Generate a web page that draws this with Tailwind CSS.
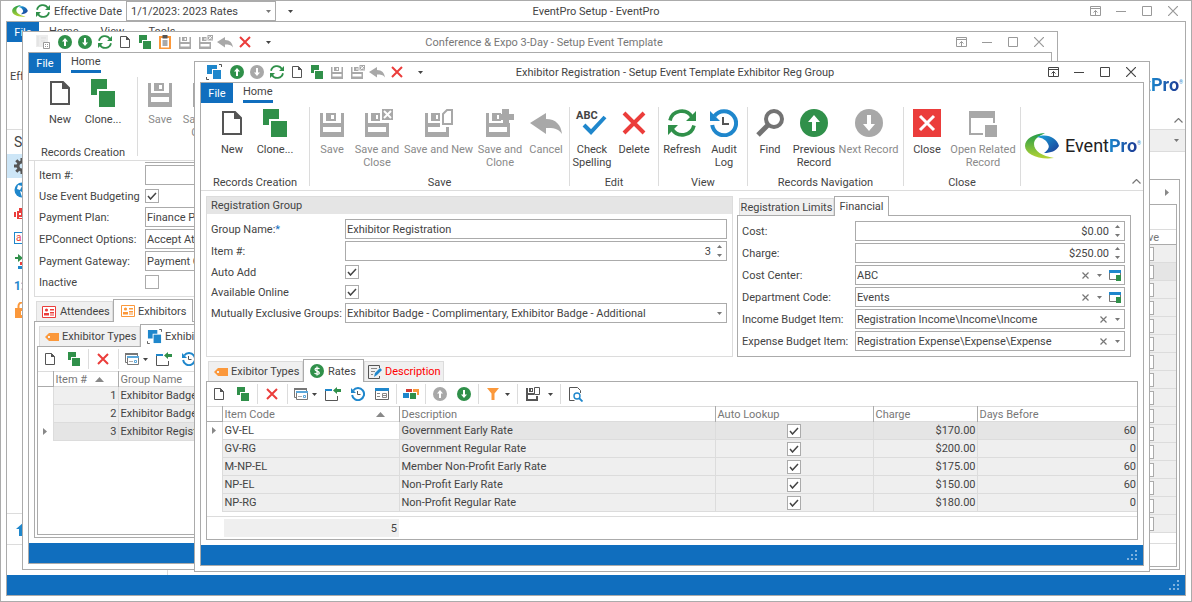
<!DOCTYPE html>
<html lang="en">
<head>
    <meta charset="UTF-8">
    <meta name="viewport" content="width=device-width, initial-scale=1.0">
    <title>EventPro Setup - EventPro</title>
    <script src="https://cdn.jsdelivr.net/npm/@tailwindcss/browser@4"></script>
</head>
<body class="bg-white font-[Roboto,sans-serif] text-[11px] leading-[13px] text-[#444]">

    <!-- Icon sprite -->
    <svg class="absolute size-0" aria-hidden="true">
        <defs>
            <linearGradient id="gGreen" x1="0" y1="0" x2="0" y2="1"><stop offset="0" stop-color="#1f9a48"/><stop offset="1" stop-color="#b5d334"/></linearGradient>
            <linearGradient id="gBlue" x1="0" y1="0" x2="1" y2="1"><stop offset="0" stop-color="#19a5dc"/><stop offset="1" stop-color="#1d3a94"/></linearGradient>
        </defs>
        <symbol id="i-new" viewBox="0 0 28 28"><path d="M5 3h12l6 6v16H5z" fill="none" stroke="#555" stroke-width="2"/><path d="M16 2v8h8z" fill="#555"/></symbol>
        <symbol id="i-clone" viewBox="0 0 28 28"><path d="M2 0h16v10H8v6H2z" fill="#30904a"/><path d="M10 12h16v16H10z" fill="#30904a"/></symbol>
        <symbol id="i-save" viewBox="0 0 28 28"><path fill="currentColor" fill-rule="evenodd" d="M2 4h3v10h18V4h3v24H2zM5 18h18v5H5zM8 4h10v8H8zM13 6h3v4h-3z"/></symbol>
        <symbol id="i-saveclose" viewBox="-4 0 32 28"><path fill="currentColor" fill-rule="evenodd" d="M0 4h3v10h21v14H0zM3 18h18v5H3zM6 4h9v8H6zM11 6h2v4h-2zM17 0h11v11H17z"/><path d="M19 2l7 7m0-7l-7 7" stroke="#fff" stroke-width="2"/></symbol>
        <symbol id="i-savenew" viewBox="-2 0 32 28"><path fill="currentColor" fill-rule="evenodd" d="M0 4h3v10h12v4H3v5h18v-5h3v10H0zM6 4h9v8H6zM11 6h2v4h-2z"/><path d="M18 5l4-4h5v14h-9z" fill="none" stroke="currentColor" stroke-width="2"/></symbol>
        <symbol id="i-saveclone" viewBox="0 0 28 28"><path fill="currentColor" fill-rule="evenodd" d="M0 4h3v10h21v14H0zM3 18h18v5H3zM6 4h9v8H6zM11 6h2v4h-2z"/><path fill="currentColor" d="M16 0h7v5h5v6h-5v5h-6v-5h-2V5h1z"/></symbol>
        <symbol id="i-undo" viewBox="0 0 32 28"><path fill="currentColor" d="M0 14L16 4v6c10 0 15 6 16 15-4-6-9-6-16-6v6z"/></symbol>
        <symbol id="i-x" viewBox="0 0 28 28"><path d="M4 4l20 20M24 4L4 24" stroke="#eb3d3b" stroke-width="4" fill="none"/></symbol>
        <symbol id="i-spell" viewBox="0 0 32 28"><path d="M8 16l7 7L29 8" stroke="#1f87cc" stroke-width="4" fill="none"/></symbol>
        <symbol id="i-refresh" viewBox="0 0 28 28"><g fill="none" stroke="#30904a" stroke-width="3.6"><path d="M2 11.500A12 12 0 0 1 24 8"/><path d="M26 16.500A12 12 0 0 1 4 20"/></g><path d="M28 2v10H18zM0 26V16h10z" fill="#30904a"/></symbol>
        <symbol id="i-audit" viewBox="0 0 28 28"><path d="M4.500 7A12 12 0 1 1 2.200 16" fill="none" stroke="#1f87cc" stroke-width="4"/><path d="M0 2v10h10z" fill="#1f87cc"/><path d="M13 8v7h6" fill="none" stroke="#555" stroke-width="2"/></symbol>
        <symbol id="i-find" viewBox="0 0 28 28"><circle cx="18" cy="10" r="8" fill="none" stroke="#737373" stroke-width="4"/><path d="M12 16L2 26" stroke="#737373" stroke-width="5"/></symbol>
        <symbol id="i-up" viewBox="0 0 28 28"><circle cx="14" cy="14" r="14" fill="currentColor"/><path d="M14 6l6 7h-4v9h-4v-9H8z" fill="#fff"/></symbol>
        <symbol id="i-down" viewBox="0 0 28 28"><circle cx="14" cy="14" r="14" fill="currentColor"/><path d="M14 22l6-7h-4V6h-4v9H8z" fill="#fff"/></symbol>
        <symbol id="i-close" viewBox="0 0 28 28"><path d="M0 0h28v28H0z" fill="#eb3d3b"/><path d="M7 7l14 14M21 7L7 21" stroke="#fff" stroke-width="3"/></symbol>
        <symbol id="i-related" viewBox="0 0 28 28"><path d="M0 2h26v12h-2V9H2v15h12v2H0z" fill="#a8a8a8"/><path d="M16 16h12v12H16z" fill="#a8a8a8"/></symbol>
        <symbol id="i-clipboard" viewBox="0 0 28 28"><path d="M4 4h20v23H4z" fill="#fff" stroke="#fb983b" stroke-width="4"/><path d="M9 0h10v7H9z" fill="#555"/><path d="M9 12h10M9 16h10M9 20h10" stroke="#555" stroke-width="2"/></symbol>
        <symbol id="i-group" viewBox="0 0 16 16"><path d="M1 1h10v4H6v5H1z" fill="#1f87cc"/><path d="M7 6h8v9H7z" fill="#1f87cc"/><path d="M13 .5h2.500V3M.5 13v2.500H3" fill="none" stroke="#555"/></symbol>
        <symbol id="i-template" viewBox="0 0 14 14"><path d="M0 0h12v12H0z" fill="#ececec"/><path d="M2 1v10M5 3h5M5 6h4" stroke="#ddd"/><path d="M7.500 7.500h6v6h-6z" fill="#fff" stroke="#999"/><path d="M9 9.500h1m1 0h1m-3 2h1m1 0h1" stroke="#999"/></symbol>
        <symbol id="i-tag" viewBox="0 0 14 10"><path fill="#fb983b" fill-rule="evenodd" d="M0 5l4-4h10v8H4zM3 4h2v2H3z"/></symbol>
        <symbol id="i-card" viewBox="0 0 14 12"><path d="M.5.5h13v11H.5z" fill="#fff" stroke="currentColor"/><circle cx="4.500" cy="4" r="1.600" fill="currentColor"/><path d="M2 9.500V7h5v2.500zM8 3h4v1.500H8zM8 6h4v1.500H8zM8 8.500h4v1H8z" fill="currentColor"/></symbol>
        <symbol id="i-dollar" viewBox="0 0 14 14"><circle cx="7" cy="7" r="7" fill="#30904a"/><path d="M9.500 4.800C8.500 3.800 5 3.600 5 5.400S9.300 7 9.300 8.900 5.500 10.300 4.500 9.200M7 2.500v9" stroke="#fff" stroke-width="1.200" fill="none"/></symbol>
        <symbol id="i-note" viewBox="0 0 14 14"><path d="M11.500 3V.5H.5v13h11V11" fill="none" stroke="#555"/><path d="M3 3.500h6M3 6.500h4M3 9.500h2" stroke="#888"/><path d="M6 12l1-4 5-5 2 2-5 5z" fill="#1f87cc"/></symbol>
        <symbol id="i-views" viewBox="0 0 14 14"><path d="M.5 10.500v-9h12V4M.5 10.500H2" fill="none" stroke="#777"/><path d="M0 1h13v2H0z" fill="#777"/><path d="M2.500 4.500h11v8h-11z" fill="#fff" stroke="#777"/><path d="M2 4h12v2H2z" fill="#5ba7da"/><path d="M4 9.500h4" stroke="#aaa"/><path d="M9.500 8.500h2v2h-2z" fill="none" stroke="#5ba7da"/></symbol>
        <symbol id="i-export" viewBox="0 0 16 14"><path d="M5 2.500H.5v11h12V9" fill="none" stroke="#555"/><path d="M0 2h7v2H0z" fill="#1f87cc"/><path d="M8 3.500L12 0v2h4v3h-4v2z" fill="#30904a"/></symbol>
        <symbol id="i-form" viewBox="0 0 14 12"><path d="M.5.500h13v11H.5z" fill="#fff" stroke="#666"/><path d="M0 0h14v3H0z" fill="#1f87cc"/><path d="M2 5.500h3m-3 3h3" stroke="#888"/><path d="M7.500 5.500h4v4h-4zM7.500 7.500h4" fill="none" stroke="#888"/></symbol>
        <symbol id="i-cubes" viewBox="0 0 16 12"><path d="M0 5h6v5H0z" fill="#1f87cc"/><path d="M3 1h6v3H3z" fill="#d23b35"/><path d="M7 5h6v6H7z" fill="#30904a"/><path d="M10 1h6v6h-2V4h-4z" fill="#fb983b"/></symbol>
        <symbol id="i-funnel" viewBox="0 0 12 12"><path d="M0 0h12L7.500 5.500V12h-3V5.500z" fill="#fb983b"/></symbol>
        <symbol id="i-savecopy" viewBox="0 0 14 14"><path fill="#555" fill-rule="evenodd" d="M0 1h2v5h6v2H2v4h8V9h2v5H0zM3 1h4v4H3zM5 2h1v2H5z"/><path d="M8.500.5h5v7h-5z" fill="#fff" stroke="#555"/></symbol>
        <symbol id="i-preview" viewBox="0 0 14 15"><path d="M11.500 6V3.500l-3-3h-8v13h5" fill="none" stroke="#555"/><circle cx="8" cy="9" r="3" fill="#fff" stroke="#1f87cc" stroke-width="1.400"/><path d="M10 11l3.500 3.500" stroke="#1f87cc" stroke-width="1.800"/></symbol>
        <symbol id="i-openwin" viewBox="0 0 12 11"><path d="M.5.500h11v9H.5z" fill="#fff" stroke="#777"/><path d="M0 0h12v3H0z" fill="#1f87cc"/><path d="M7 5h5v6H7z" fill="#30904a"/></symbol>
        <symbol id="i-caret" viewBox="0 0 5 3"><path d="M0 0h5L2.500 3z" fill="currentColor"/></symbol>
        <symbol id="i-caretup" viewBox="0 0 5 3"><path d="M0 3h5L2.500 0z" fill="currentColor"/></symbol>
        <symbol id="i-clear" viewBox="0 0 7 7"><path d="M.5.500l6 6m0-6l-6 6" stroke="#777" stroke-width="1.200"/></symbol>
        <symbol id="i-sort" viewBox="0 0 9 5"><path d="M0 5h9L4.500 0z" fill="#888"/></symbol>
        <symbol id="i-row" viewBox="0 0 4 7"><path d="M0 0l4 3.500L0 7z" fill="#888"/></symbol>
        <symbol id="i-check" viewBox="0 0 10 8"><path d="M1 4l2.500 3L9 1" fill="none" stroke="#444" stroke-width="1.500"/></symbol>
        <symbol id="i-chevron" viewBox="0 0 9 5"><path d="M.5 4.500l4-4 4 4" fill="none" stroke="#777" stroke-width="1.200"/></symbol>
        <symbol id="i-ribbon" viewBox="0 0 11 10"><path d="M.5.500h10v9H.5zM0 2.500h11M5.500 9V4.500M3.500 6.500l2-2 2 2" fill="none" stroke="currentColor"/></symbol>
        <symbol id="i-min" viewBox="0 0 10 10"><path d="M0 5.500h10" stroke="currentColor"/></symbol>
        <symbol id="i-max" viewBox="0 0 10 10"><path d="M.5.500h9v9h-9z" fill="none" stroke="currentColor"/></symbol>
        <symbol id="i-winx" viewBox="0 0 10 10"><path d="M0 0l10 10M10 0L0 10" stroke="currentColor" stroke-width="1.200"/></symbol>
        <symbol id="i-grip" viewBox="0 0 10 10"><path d="M8 0h2v2H8zM4 4h2v2H4zM8 4h2v2H8zM0 8h2v2H0zM4 8h2v2H4zM8 8h2v2H8z" fill="#7fb2de"/></symbol>
        <symbol id="i-swoosh" viewBox="0 0 34 26"><path d="M20 0C8 1 0 6 0 13c0 8 13 14 29 12-12-2-20-7-20-14 0-5 5-8 11-11z" fill="url(#gGreen)"/><path d="M12 4c10-4 20 1 22 9-3 5-8 7-15 7 4-3 6-6 4-9-2-4-5-6-11-7z" fill="url(#gBlue)"/></symbol>
        <symbol id="i-gear" viewBox="0 0 16 16"><circle cx="8" cy="8" r="4" fill="none" stroke="#555" stroke-width="3"/><path d="M8 0v3M8 13v3M0 8h3M13 8h3M2.300 2.300l2.200 2.200M11.500 11.500l2.200 2.200M2.300 13.700l2.200-2.200M11.500 4.500l2.200-2.200" stroke="#555" stroke-width="3"/></symbol>
        <symbol id="i-globe" viewBox="0 0 16 16"><circle cx="8" cy="8" r="7.500" fill="#1f87cc"/><path d="M4 3l4 1-2 4-3-1zM6 9l4 2-2 4z" fill="#fff"/></symbol>
        <symbol id="i-robot" viewBox="0 0 16 14"><path d="M0 5h2v5H0zM3 4h2V1h3v3h5v8H3z" fill="#eb3d3b"/><path d="M5 6h2v2H5zM9 6h2v2H9zM5 10h6v1H5z" fill="#fff"/></symbol>
        <symbol id="i-flow" viewBox="0 0 16 16"><path d="M0 3h3V0l5 4-5 4V5H0z" fill="#30904a"/><path d="M5 8h4v3H5z" fill="#eb3d3b"/><path d="M3 12h5v3H3z" fill="#1f87cc"/></symbol>
        <symbol id="i-lock" viewBox="0 0 14 16"><path d="M3.500 7V4a3.500 3.500 0 0 1 7 0v3" fill="none" stroke="#fb983b" stroke-width="2"/><path fill="#fb983b" fill-rule="evenodd" d="M0 6h14v10H0zM6 9h2v4H6z"/></symbol>
        <symbol id="i-home" viewBox="0 0 16 14"><path d="M0 7l8-7 8 7h-3v7H3V7z" fill="#1f87cc"/></symbol>
    </svg>

    <main class="relative h-screen min-h-[602px] overflow-hidden">

        <!-- Main window -->
        <section class="absolute inset-0 isolate flex flex-col border border-[#ababab] bg-white px-[5px] pb-[5px]">
            <header class="flex h-5 items-center">
                <div class="flex flex-1 items-center">
                    <svg class="ml-1.5 h-3 w-4"><use href="#i-swoosh"/></svg>
                    <svg class="ml-2 size-3.5"><use href="#i-refresh"/></svg>
                    <label for="effDate" class="ml-1 w-[72px]">Effective Date</label>
                    <div class="flex h-5 w-[150px] items-center border border-[#ababab] pr-1">
                        <select id="effDate" class="flex-1 appearance-none pl-1"><option>1/1/2023: 2023 Rates</option></select>
                        <svg class="h-[3px] w-[5px] text-[#777]"><use href="#i-caret"/></svg>
                    </div>
                    <button aria-label="Customize" class="ml-3"><svg class="h-[3px] w-[5px]"><use href="#i-caret"/></svg></button>
                </div>
                <h1>EventPro Setup - EventPro</h1>
                <div class="flex flex-1 justify-end text-[#999]">
                    <button aria-label="Ribbon options" class="flex w-[26px] justify-center"><svg class="h-2.5 w-[11px]"><use href="#i-ribbon"/></svg></button>
                    <button aria-label="Minimize" class="flex w-[26px] justify-center"><svg class="size-2.5"><use href="#i-min"/></svg></button>
                    <button aria-label="Maximize" class="flex w-[26px] justify-center"><svg class="size-2.5"><use href="#i-max"/></svg></button>
                    <button aria-label="Close window" class="flex w-[26px] justify-center"><svg class="size-2.5"><use href="#i-winx"/></svg></button>
                </div>
            </header>
            <div class="flex min-h-0 flex-1 flex-col border border-[#ababab]">
                <nav class="flex h-5">
                    <button class="w-8 bg-[#106ebe] text-white">File</button>
                    <button class="ml-2.5 self-start pt-[3px]">Home</button>
                    <button class="ml-[22px] self-start pt-[3px]">View</button>
                    <button class="ml-6 self-start pt-[3px]">Tools</button>
                </nav>
                <div class="flex h-[87px] justify-between">
                    <span class="pl-[3px] pt-7">Effective Date</span>
                    <div class="flex flex-col items-end pr-0.5">
                        <div class="flex flex-1 items-center pt-4 text-[18px] leading-5 text-[#222]">
                            <svg class="mr-1.5 h-[26px] w-[34px]"><use href="#i-swoosh"/></svg>Event<b class="bg-gradient-to-r from-[#1a86cc] to-[#1d3a94] bg-clip-text text-transparent">Pro</b><sup class="text-[5px] text-[#1f87cc]">®</sup>
                        </div>
                        <button aria-label="Collapse ribbon" class="flex h-[18px] items-center"><svg class="h-[5px] w-[9px]"><use href="#i-chevron"/></svg></button>
                    </div>
                </div>
                <div class="flex min-h-0 flex-1 border-t border-[#dcdcdc]">
                    <!-- Navigation pane -->
                    <aside class="flex w-[161px] flex-col border-r border-[#dcdcdc]">
                        <h2 class="h-6 pl-[7px] pt-1 text-[14px] leading-4">Setup</h2>
                        <a href="#" aria-label="General" class="flex h-6 items-center bg-[#cde6f7] pl-[7px]"><svg class="size-4"><use href="#i-gear"/></svg></a>
                        <a href="#" aria-label="Web" class="flex h-6 items-center pl-[7px]"><svg class="size-4"><use href="#i-globe"/></svg></a>
                        <a href="#" aria-label="Automation" class="flex h-6 items-center pl-[7px]"><svg class="h-3.5 w-4"><use href="#i-robot"/></svg></a>
                        <a href="#" class="flex h-6 items-center pl-[7px]"><span class="h-3 w-4 border border-[#1f87cc] pl-px text-[10px] leading-[9px] text-[#eb3d3b]">a</span></a>
                        <a href="#" aria-label="Workflow" class="flex h-6 items-center pl-2"><svg class="size-4"><use href="#i-flow"/></svg></a>
                        <a href="#" class="flex h-6 items-center pl-[7px] text-[12px] font-bold text-[#1f87cc]">123</a>
                        <a href="#" aria-label="Security" class="flex h-6 items-center pl-2"><svg class="h-4 w-3.5"><use href="#i-lock"/></svg></a>
                        <a href="#" aria-label="Start" class="mb-[30px] mt-auto flex h-8 items-center border-y border-[#dcdcdc] pl-[9px]"><svg class="h-3.5 w-4"><use href="#i-home"/></svg></a>
                    </aside>
                    <!-- List behind the dialogs -->
                    <div class="flex flex-1 flex-col pb-[5px]">
                        <div class="flex h-[22px] items-center justify-end border-b border-[#dcdcdc] bg-[#efefef] pr-1.5 text-[#777]">
                            <svg class="h-[3px] w-[5px]"><use href="#i-caret"/></svg>
                        </div>
                        <div class="mr-[5px] mt-[27px] flex flex-1 flex-col border border-[#ababab]">
                            <div class="flex h-6 items-center justify-end gap-[15px] pr-2.5">
                                <div class="h-5 w-px bg-[#dcdcdc]"></div>
                                <svg class="h-[7px] w-1"><use href="#i-row"/></svg>
                            </div>
                            <div class="mb-0.5 mr-0.5 flex-1 border border-[#ababab] pt-6">
                                <table class="w-full table-fixed">
                                    <thead>
                                        <tr class="h-[15px] border-b border-[#ababab] border-t border-t-[#dcdcdc] text-left text-[#777]">
                                            <th class="font-normal">Name</th>
                                            <th class="w-[58px] pl-[3px] font-normal">Inactive</th>
                                        </tr>
                                    </thead>
                                    <tbody id="listRows"></tbody>
                                </table>
                                <div class="mt-2.5 border-t border-[#dcdcdc]"></div>
                            </div>
                        </div>
                    </div>
                </div>
                <footer class="flex h-5 items-center justify-end bg-[#106ebe] pr-1.5"><svg class="size-2.5"><use href="#i-grip"/></svg></footer>
            </div>
        </section>

        <!-- Event template window -->
        <section class="absolute bottom-8 left-[22px] right-[134px] top-[31px] isolate flex flex-col border border-[#ababab] bg-white px-[5px] pb-[5px]">
            <header class="flex h-5 items-center text-[#777]">
                <div class="flex flex-1 items-center gap-1.5 pl-2 text-[#a8a8a8]">
                    <svg class="mr-0.5 size-3.5"><use href="#i-template"/></svg>
                    <svg class="size-3.5 text-[#30904a]"><use href="#i-up"/></svg>
                    <svg class="size-3.5 text-[#30904a]"><use href="#i-down"/></svg>
                    <svg class="size-3.5"><use href="#i-refresh"/></svg>
                    <svg class="size-3.5"><use href="#i-new"/></svg>
                    <svg class="size-3.5"><use href="#i-clone"/></svg>
                    <svg class="size-3.5"><use href="#i-clipboard"/></svg>
                    <svg class="size-3.5"><use href="#i-save"/></svg>
                    <svg class="-mx-px h-3.5 w-4"><use href="#i-saveclose"/></svg>
                    <svg class="-mx-px h-3.5 w-4"><use href="#i-undo"/></svg>
                    <svg class="size-3.5"><use href="#i-x"/></svg>
                    <svg class="ml-2 h-[3px] w-[5px] text-[#444]"><use href="#i-caret"/></svg>
                </div>
                <h2>Conference &amp; Expo 3-Day - Setup Event Template</h2>
                <div class="flex flex-1 justify-end text-[#999]">
                    <button aria-label="Ribbon options" class="flex w-[26px] justify-center"><svg class="h-2.5 w-[11px]"><use href="#i-ribbon"/></svg></button>
                    <button aria-label="Minimize" class="flex w-[26px] justify-center"><svg class="size-2.5"><use href="#i-min"/></svg></button>
                    <button aria-label="Maximize" class="flex w-[26px] justify-center"><svg class="size-2.5"><use href="#i-max"/></svg></button>
                    <button aria-label="Close window" class="flex w-[26px] justify-center"><svg class="size-2.5"><use href="#i-winx"/></svg></button>
                </div>
            </header>
            <div class="flex min-h-0 flex-1 flex-col border border-[#ababab]">
                <nav class="flex h-5">
                    <button class="w-8 bg-[#106ebe] text-white">File</button>
                    <button class="ml-2.5 border-b-3 border-[#106ebe]">Home</button>
                </nav>
                <div class="flex h-[87px]">
                    <div class="flex w-[108px] flex-col justify-between pb-px">
                        <div class="flex pl-2.5 pt-1.5">
                            <button class="flex w-[42px] flex-col items-center gap-1.5"><svg class="size-7"><use href="#i-new"/></svg>New</button>
                            <button class="flex w-[44px] flex-col items-center gap-1.5"><svg class="size-7"><use href="#i-clone"/></svg>Clone...</button>
                        </div>
                        <div class="text-center">Records Creation</div>
                    </div>
                    <div class="my-1 w-px bg-[#dcdcdc]"></div>
                    <div class="flex items-start pt-1.5 text-[#8a8a8a]">
                        <button class="flex w-11 flex-col items-center gap-1.5"><svg class="size-7 text-[#a8a8a8]"><use href="#i-save"/></svg>Save</button>
                        <button class="flex w-[46px] flex-col items-center gap-1.5"><svg class="h-7 w-8 text-[#a8a8a8]"><use href="#i-saveclose"/></svg>Save and Close</button>
                    </div>
                </div>
                <div class="flex min-h-0 flex-1 flex-col border-t border-[#dcdcdc] px-[5px] pb-[5px]">
                    <div class="flex h-[136px] flex-col border-x border-b border-[#dcdcdc] pl-1">
                        <div class="ml-[106px] h-0.5 border-b border-[#ababab]"></div>
                        <div class="mt-0.5 flex h-5 items-center">
                            <label for="tItem" class="w-[106px]">Item #:</label>
                            <input id="tItem" class="h-5 flex-1 border border-[#ababab] px-px">
                        </div>
                        <div class="flex h-[22px] items-center">
                            <label for="tBudget" class="w-[106px]">Use Event Budgeting</label>
                            <span class="grid place-items-center">
                                <input id="tBudget" type="checkbox" checked class="peer col-start-1 row-start-1 size-3.5 appearance-none border border-[#ababab] bg-white">
                                <svg class="pointer-events-none invisible col-start-1 row-start-1 h-2 w-2.5 peer-checked:visible"><use href="#i-check"/></svg>
                            </span>
                        </div>
                        <div class="mb-0.5 flex h-5 items-center">
                            <label for="tPlan" class="w-[106px]">Payment Plan:</label>
                            <select id="tPlan" class="h-5 flex-1 appearance-none border border-[#ababab] px-px"><option>Finance Plan</option></select>
                        </div>
                        <div class="mb-0.5 flex h-5 items-center">
                            <label for="tConnect" class="w-[106px]">EPConnect Options:</label>
                            <select id="tConnect" class="h-5 flex-1 appearance-none border border-[#ababab] px-px"><option>Accept Attendees</option></select>
                        </div>
                        <div class="flex h-5 items-center">
                            <label for="tGateway" class="w-[106px]">Payment Gateway:</label>
                            <select id="tGateway" class="h-5 flex-1 appearance-none border border-[#ababab] px-px"><option>Payment Gateway</option></select>
                        </div>
                        <div class="flex h-[22px] items-center">
                            <label for="tInactive" class="w-[106px]">Inactive</label>
                            <input id="tInactive" type="checkbox" class="size-3.5 appearance-none border border-[#ababab] bg-white">
                        </div>
                    </div>
                    <div class="mt-0.5 flex h-[22px] items-end pl-0.5">
                        <button class="flex h-5 w-[77px] items-center gap-1 border border-b-0 border-[#dcdcdc] bg-[#f0f0f0] pl-[5px]"><svg class="h-3 w-3.5 text-[#eb3d3b]"><use href="#i-card"/></svg>Attendees</button>
                        <button class="relative z-10 -mb-px flex h-[23px] w-20 items-center gap-[3px] border border-b-0 border-[#ababab] bg-white pl-[7px]"><svg class="h-3 w-3.5 text-[#fb983b]"><use href="#i-card"/></svg>Exhibitors</button>
                    </div>
                    <div class="flex min-h-0 flex-1 flex-col border border-[#ababab] p-0.5">
                        <div class="flex h-[22px] items-end pl-0.5">
                            <button class="flex h-5 w-[101px] items-center gap-[3px] border border-b-0 border-[#dcdcdc] bg-[#f0f0f0] pl-[5px]"><svg class="h-2.5 w-3.5"><use href="#i-tag"/></svg>Exhibitor Types</button>
                            <button class="relative z-10 -mb-px flex h-[23px] w-[150px] items-center gap-[3px] border border-b-0 border-[#ababab] bg-white pl-1.5"><svg class="size-[15px]"><use href="#i-group"/></svg>Exhibitor Reg Groups</button>
                        </div>
                        <div class="flex-1 border border-[#ababab]">
                            <div class="flex h-6 items-center pl-[5px]">
                                <button aria-label="New" class="w-3.5"><svg class="size-3.5"><use href="#i-new"/></svg></button>
                                <button aria-label="Clone" class="ml-2.5"><svg class="size-3.5"><use href="#i-clone"/></svg></button>
                                <div class="ml-[7px] h-5 w-px bg-[#dcdcdc]"></div>
                                <button aria-label="Delete" class="ml-[7px]"><svg class="size-3.5"><use href="#i-x"/></svg></button>
                                <div class="ml-2 h-5 w-px bg-[#dcdcdc]"></div>
                                <button aria-label="Views" class="ml-1.5 flex items-center gap-1"><svg class="size-3.5"><use href="#i-views"/></svg><svg class="h-[3px] w-[5px]"><use href="#i-caret"/></svg></button>
                                <button aria-label="Export" class="ml-2"><svg class="h-3.5 w-4"><use href="#i-export"/></svg></button>
                                <button aria-label="Audit log" class="ml-2.5"><svg class="size-3.5"><use href="#i-audit"/></svg></button>
                            </div>
                            <table class="w-full table-fixed border-t border-[#dcdcdc]">
                                <thead>
                                    <tr class="h-[15px] border-b border-[#ababab] text-left text-[#777]">
                                        <th class="w-[15px]"></th>
                                        <th class="w-[65px] border-l border-[#ababab] pl-0.5 font-normal"><span class="flex items-center gap-2">Item #<svg class="h-[5px] w-[9px]"><use href="#i-sort"/></svg></span></th>
                                        <th class="border-l border-[#ababab] pl-0.5 font-normal">Group Name</th>
                                    </tr>
                                </thead>
                                <tbody>
                                    <tr class="h-[18px]">
                                        <td></td>
                                        <td class="border border-[#dcdcdc] bg-[#efefef] pr-px text-right">1</td>
                                        <td class="border border-[#dcdcdc] bg-[#efefef] pl-0.5">Exhibitor Badge - Complimentary</td>
                                    </tr>
                                    <tr class="h-[18px]">
                                        <td></td>
                                        <td class="border border-[#dcdcdc] bg-[#efefef] pr-px text-right">2</td>
                                        <td class="border border-[#dcdcdc] bg-[#efefef] pl-0.5">Exhibitor Badge - Additional</td>
                                    </tr>
                                    <tr class="h-[18px]">
                                        <td><svg class="mx-auto h-[7px] w-1"><use href="#i-row"/></svg></td>
                                        <td class="border border-[#dcdcdc] bg-[#e5e5e5] pr-px text-right">3</td>
                                        <td class="border border-[#dcdcdc] bg-[#e5e5e5] pl-0.5">Exhibitor Registration</td>
                                    </tr>
                                </tbody>
                            </table>
                        </div>
                    </div>
                </div>
                <footer class="h-5 bg-[#106ebe]"></footer>
            </div>
        </section>

        <!-- Exhibitor registration window -->
        <section class="absolute bottom-[30px] left-[194px] right-[42px] top-[61px] isolate flex flex-col border border-[#ababab] bg-white px-[5px] pb-[5px]">
            <header class="flex h-5 items-center">
                <div class="flex flex-1 items-center gap-1.5 pl-1.5 text-[#a8a8a8]">
                    <svg class="mr-0.5 size-4"><use href="#i-group"/></svg>
                    <button aria-label="Previous"><svg class="size-3.5 text-[#30904a]"><use href="#i-up"/></svg></button>
                    <button aria-label="Next"><svg class="size-3.5"><use href="#i-down"/></svg></button>
                    <button aria-label="Refresh"><svg class="size-3.5"><use href="#i-refresh"/></svg></button>
                    <button aria-label="New"><svg class="size-3.5"><use href="#i-new"/></svg></button>
                    <button aria-label="Clone"><svg class="size-3.5"><use href="#i-clone"/></svg></button>
                    <button aria-label="Save"><svg class="size-3.5"><use href="#i-save"/></svg></button>
                    <button aria-label="Save and close" class="-mx-px"><svg class="h-3.5 w-4"><use href="#i-saveclose"/></svg></button>
                    <button aria-label="Cancel" class="-mx-px"><svg class="h-3.5 w-4"><use href="#i-undo"/></svg></button>
                    <button aria-label="Delete"><svg class="size-3.5"><use href="#i-x"/></svg></button>
                    <button aria-label="Customize" class="ml-2 text-[#444]"><svg class="h-[3px] w-[5px]"><use href="#i-caret"/></svg></button>
                </div>
                <h2>Exhibitor Registration - Setup Event Template Exhibitor Reg Group</h2>
                <div class="flex flex-1 justify-end">
                    <button aria-label="Ribbon options" class="flex w-[26px] justify-center"><svg class="h-2.5 w-[11px]"><use href="#i-ribbon"/></svg></button>
                    <button aria-label="Minimize" class="flex w-[26px] justify-center"><svg class="size-2.5"><use href="#i-min"/></svg></button>
                    <button aria-label="Maximize" class="flex w-[26px] justify-center"><svg class="size-2.5"><use href="#i-max"/></svg></button>
                    <button aria-label="Close window" class="flex w-[26px] justify-center"><svg class="size-2.5"><use href="#i-winx"/></svg></button>
                </div>
            </header>

            <div class="flex min-h-0 flex-1 flex-col border border-[#ababab]">
                <nav class="flex h-5">
                    <button class="w-8 bg-[#106ebe] text-white">File</button>
                    <button class="ml-2.5 border-b-3 border-[#106ebe]">Home</button>
                </nav>

                <!-- Ribbon -->
                <div class="flex h-[87px]">
                    <div class="flex w-[108px] flex-col justify-between pb-px">
                        <div class="flex pl-2.5 pt-1.5">
                            <button class="flex w-[42px] flex-col items-center gap-1.5"><svg class="size-7"><use href="#i-new"/></svg>New</button>
                            <button class="flex w-[44px] flex-col items-center gap-1.5"><svg class="size-7"><use href="#i-clone"/></svg>Clone...</button>
                        </div>
                        <div class="text-center">Records Creation</div>
                    </div>
                    <div class="my-1 w-px bg-[#dcdcdc]"></div>
                    <div class="flex w-[259px] flex-col justify-between pb-px">
                        <div class="flex items-start pt-1.5 text-[#8a8a8a]">
                            <button class="flex w-11 flex-col items-center gap-1.5"><svg class="size-7 text-[#a8a8a8]"><use href="#i-save"/></svg>Save</button>
                            <button class="flex w-[46px] flex-col items-center gap-1.5"><svg class="h-7 w-8 text-[#a8a8a8]"><use href="#i-saveclose"/></svg>Save and Close</button>
                            <button class="flex w-[77px] flex-col items-center gap-1.5"><svg class="h-7 w-8 text-[#a8a8a8]"><use href="#i-savenew"/></svg>Save and New</button>
                            <button class="flex w-[46px] flex-col items-center gap-1.5"><svg class="size-7 text-[#a8a8a8]"><use href="#i-saveclone"/></svg>Save and Clone</button>
                            <button class="flex w-[46px] flex-col items-center gap-1.5"><svg class="h-7 w-8 text-[#a8a8a8]"><use href="#i-undo"/></svg>Cancel</button>
                        </div>
                        <div class="text-center">Save</div>
                    </div>
                    <div class="my-1 w-px bg-[#dcdcdc]"></div>
                    <div class="flex w-[88px] flex-col justify-between pb-px">
                        <div class="flex items-start pt-1.5">
                            <button class="flex w-11 flex-col items-center gap-1.5">
                                <span class="grid h-7 w-8"><span class="z-10 col-start-1 row-start-1 text-left text-[11px] font-bold">ABC</span><svg class="col-start-1 row-start-1 h-7 w-8"><use href="#i-spell"/></svg></span>Check Spelling
                            </button>
                            <button class="flex w-10 flex-col items-center gap-1.5"><svg class="size-7"><use href="#i-x"/></svg>Delete</button>
                        </div>
                        <div class="text-center">Edit</div>
                    </div>
                    <div class="my-1 w-px bg-[#dcdcdc]"></div>
                    <div class="flex w-[88px] flex-col justify-between pb-px">
                        <div class="flex items-start pt-1.5">
                            <button class="flex w-[46px] flex-col items-center gap-1.5"><svg class="size-7"><use href="#i-refresh"/></svg>Refresh</button>
                            <button class="flex w-[38px] flex-col items-center gap-1.5"><svg class="size-7"><use href="#i-audit"/></svg>Audit<br>Log</button>
                        </div>
                        <div class="text-center">View</div>
                    </div>
                    <div class="my-1 w-px bg-[#dcdcdc]"></div>
                    <div class="flex w-[155px] flex-col justify-between pb-px">
                        <div class="flex items-start pt-1.5">
                            <button class="flex w-11 flex-col items-center gap-1.5"><svg class="size-7"><use href="#i-find"/></svg>Find</button>
                            <button class="flex w-11 flex-col items-center gap-1.5"><svg class="size-7 text-[#30904a]"><use href="#i-up"/></svg>Previous Record</button>
                            <button class="flex w-[65px] flex-col items-center gap-1.5 text-[#8a8a8a]"><svg class="size-7 text-[#a8a8a8]"><use href="#i-down"/></svg>Next Record</button>
                        </div>
                        <div class="text-center">Records Navigation</div>
                    </div>
                    <div class="my-1 w-px bg-[#dcdcdc]"></div>
                    <div class="flex w-[116px] flex-col justify-between pb-px">
                        <div class="flex items-start pt-1.5">
                            <button class="flex w-[46px] flex-col items-center gap-1.5"><svg class="size-7"><use href="#i-close"/></svg>Close</button>
                            <button class="flex w-[66px] flex-col items-center gap-1.5 text-[#8a8a8a]"><svg class="size-7"><use href="#i-related"/></svg>Open Related Record</button>
                        </div>
                        <div class="text-center">Close</div>
                    </div>
                    <div class="my-1 w-px bg-[#dcdcdc]"></div>
                    <div class="ml-auto flex flex-col items-end pr-0.5">
                        <div class="flex flex-1 items-center pt-4 text-[18px] leading-5 text-[#222]">
                            <svg class="mr-1.5 h-[26px] w-[34px]"><use href="#i-swoosh"/></svg>Event<b class="bg-gradient-to-r from-[#1a86cc] to-[#1d3a94] bg-clip-text text-transparent">Pro</b><sup class="text-[5px] text-[#1f87cc]">®</sup>
                        </div>
                        <button aria-label="Collapse ribbon" class="flex h-[18px] items-center"><svg class="h-[5px] w-[9px]"><use href="#i-chevron"/></svg></button>
                    </div>
                </div>

                <div class="flex min-h-0 flex-1 flex-col border-t border-[#dcdcdc] px-[5px] pb-[5px] pt-[5px]">
                    <div class="mr-[7px] grid grid-cols-[527fr_394fr] gap-1">
                        <!-- Registration group -->
                        <div class="border border-[#dcdcdc]">
                            <h3 class="flex h-[17px] items-center bg-[#e5e5e5] pl-1">Registration Group</h3>
                            <div class="flex flex-col pl-1 pr-[5px] pt-[5px]">
                                <div class="mb-0.5 flex h-5 items-center">
                                    <label for="gName" class="w-[134px]">Group Name:<span class="text-[#106ebe]">*</span></label>
                                    <input id="gName" value="Exhibitor Registration" class="h-5 flex-1 border border-[#ababab] px-px">
                                </div>
                                <div class="mb-px flex h-5 items-center">
                                    <label for="gItem" class="w-[134px]">Item #:</label>
                                    <div class="flex h-5 flex-1 items-center border border-[#ababab] pr-1 text-[#777]">
                                        <input id="gItem" value="3" class="min-w-0 flex-1 pr-1.5 text-right text-[#444]">
                                        <span class="flex flex-col gap-1.5">
                                            <button aria-label="Increase item number"><svg class="h-[3px] w-[5px]"><use href="#i-caretup"/></svg></button>
                                            <button aria-label="Decrease item number"><svg class="h-[3px] w-[5px]"><use href="#i-caret"/></svg></button>
                                        </span>
                                    </div>
                                </div>
                                <div class="flex h-5 items-center">
                                    <label for="gAuto" class="w-[134px]">Auto Add</label>
                                    <span class="grid place-items-center">
                                        <input id="gAuto" type="checkbox" checked class="peer col-start-1 row-start-1 size-3.5 appearance-none border border-[#ababab] bg-white">
                                        <svg class="pointer-events-none invisible col-start-1 row-start-1 h-2 w-2.5 peer-checked:visible"><use href="#i-check"/></svg>
                                    </span>
                                </div>
                                <div class="mb-px flex h-5 items-center">
                                    <label for="gOnline" class="w-[134px]">Available Online</label>
                                    <span class="grid place-items-center">
                                        <input id="gOnline" type="checkbox" checked class="peer col-start-1 row-start-1 size-3.5 appearance-none border border-[#ababab] bg-white">
                                        <svg class="pointer-events-none invisible col-start-1 row-start-1 h-2 w-2.5 peer-checked:visible"><use href="#i-check"/></svg>
                                    </span>
                                </div>
                                <div class="flex h-5 items-center">
                                    <label for="gExcl" class="w-[134px]">Mutually Exclusive Groups:</label>
                                    <div class="flex h-5 flex-1 items-center border border-[#ababab] pr-1 text-[#777]">
                                        <select id="gExcl" class="min-w-0 flex-1 appearance-none pl-px text-[#444]"><option>Exhibitor Badge - Complimentary, Exhibitor Badge - Additional</option></select>
                                        <svg class="h-[3px] w-[5px]"><use href="#i-caret"/></svg>
                                    </div>
                                </div>
                            </div>
                        </div>

                        <!-- Financial -->
                        <div>
                            <div class="flex h-[19px] items-end pl-0.5">
                                <button class="h-[17px] w-[95px] border border-b-0 border-[#dcdcdc] bg-[#f0f0f0]">Registration Limits</button>
                                <button class="relative z-10 -mb-px h-5 w-[55px] border border-b-0 border-[#ababab] bg-white">Financial</button>
                            </div>
                            <div class="flex flex-col gap-0.5 border border-[#ababab] px-[5px] py-[5px] pl-1">
                                <div class="flex h-5 items-center">
                                    <label for="fCost" class="w-[113px]">Cost:</label>
                                    <div class="flex h-5 flex-1 items-center border border-[#ababab] pr-1 text-[#777]">
                                        <input id="fCost" value="$0.00" class="min-w-0 flex-1 pr-1.5 text-right text-[#444]">
                                        <span class="flex flex-col gap-1.5">
                                            <button aria-label="Increase cost"><svg class="h-[3px] w-[5px]"><use href="#i-caretup"/></svg></button>
                                            <button aria-label="Decrease cost"><svg class="h-[3px] w-[5px]"><use href="#i-caret"/></svg></button>
                                        </span>
                                    </div>
                                </div>
                                <div class="flex h-5 items-center">
                                    <label for="fCharge" class="w-[113px]">Charge:</label>
                                    <div class="flex h-5 flex-1 items-center border border-[#ababab] pr-1 text-[#777]">
                                        <input id="fCharge" value="$250.00" class="min-w-0 flex-1 pr-1.5 text-right text-[#444]">
                                        <span class="flex flex-col gap-1.5">
                                            <button aria-label="Increase charge"><svg class="h-[3px] w-[5px]"><use href="#i-caretup"/></svg></button>
                                            <button aria-label="Decrease charge"><svg class="h-[3px] w-[5px]"><use href="#i-caret"/></svg></button>
                                        </span>
                                    </div>
                                </div>
                                <div class="flex h-5 items-center">
                                    <label for="fCenter" class="w-[113px]">Cost Center:</label>
                                    <div class="flex h-5 flex-1 items-center border border-[#ababab] pr-[3px] text-[#777]">
                                        <select id="fCenter" class="min-w-0 flex-1 appearance-none pl-px text-[#444]"><option>ABC</option></select>
                                        <button aria-label="Clear cost center"><svg class="size-[7px]"><use href="#i-clear"/></svg></button>
                                        <svg class="ml-2 h-[3px] w-[5px]"><use href="#i-caret"/></svg>
                                        <button aria-label="Open cost center" class="ml-[7px]"><svg class="h-[11px] w-3"><use href="#i-openwin"/></svg></button>
                                    </div>
                                </div>
                                <div class="flex h-5 items-center">
                                    <label for="fDept" class="w-[113px]">Department Code:</label>
                                    <div class="flex h-5 flex-1 items-center border border-[#ababab] pr-[3px] text-[#777]">
                                        <select id="fDept" class="min-w-0 flex-1 appearance-none pl-px text-[#444]"><option>Events</option></select>
                                        <button aria-label="Clear department"><svg class="size-[7px]"><use href="#i-clear"/></svg></button>
                                        <svg class="ml-2 h-[3px] w-[5px]"><use href="#i-caret"/></svg>
                                        <button aria-label="Open department" class="ml-[7px]"><svg class="h-[11px] w-3"><use href="#i-openwin"/></svg></button>
                                    </div>
                                </div>
                                <div class="flex h-5 items-center">
                                    <label for="fIncome" class="w-[113px]">Income Budget Item:</label>
                                    <div class="flex h-5 flex-1 items-center border border-[#ababab] pr-1 text-[#777]">
                                        <select id="fIncome" class="min-w-0 flex-1 appearance-none pl-px text-[#444]"><option>Registration Income\Income\Income</option></select>
                                        <button aria-label="Clear income item"><svg class="size-[7px]"><use href="#i-clear"/></svg></button>
                                        <svg class="ml-2 h-[3px] w-[5px]"><use href="#i-caret"/></svg>
                                    </div>
                                </div>
                                <div class="flex h-5 items-center">
                                    <label for="fExpense" class="w-[113px]">Expense Budget Item:</label>
                                    <div class="flex h-5 flex-1 items-center border border-[#ababab] pr-1 text-[#777]">
                                        <select id="fExpense" class="min-w-0 flex-1 appearance-none pl-px text-[#444]"><option>Registration Expense\Expense\Expense</option></select>
                                        <button aria-label="Clear expense item"><svg class="size-[7px]"><use href="#i-clear"/></svg></button>
                                        <svg class="ml-2 h-[3px] w-[5px]"><use href="#i-caret"/></svg>
                                    </div>
                                </div>
                            </div>
                        </div>
                    </div>

                    <!-- Detail tabs -->
                    <div class="mt-0.5 flex h-[22px] items-end pl-0.5">
                        <button class="flex h-5 w-[95px] items-center gap-[3px] border border-b-0 border-[#dcdcdc] bg-[#f0f0f0] pl-[5px]"><svg class="h-2.5 w-3.5"><use href="#i-tag"/></svg>Exibitor Types</button>
                        <button class="relative z-10 -mb-px flex h-[23px] w-[61px] items-center gap-1 border border-b-0 border-[#ababab] bg-white pl-1.5"><svg class="size-3.5"><use href="#i-dollar"/></svg>Rates</button>
                        <button class="flex h-5 w-20 items-center gap-[3px] border border-b-0 border-[#dcdcdc] bg-[#f0f0f0] pl-[3px] text-[#f00]"><svg class="size-3.5"><use href="#i-note"/></svg>Description</button>
                    </div>
                    <div class="flex min-h-0 flex-1 flex-col border border-[#ababab]">
                        <div class="flex h-6 items-center pl-[5px]">
                            <button aria-label="New rate"><svg class="size-3.5"><use href="#i-new"/></svg></button>
                            <button aria-label="Clone rate" class="ml-2.5"><svg class="size-3.5"><use href="#i-clone"/></svg></button>
                            <div class="ml-[7px] h-5 w-px bg-[#dcdcdc]"></div>
                            <button aria-label="Delete rate" class="ml-[7px]"><svg class="size-3.5"><use href="#i-x"/></svg></button>
                            <div class="ml-2 h-5 w-px bg-[#dcdcdc]"></div>
                            <button aria-label="Views" class="ml-1.5 flex items-center gap-1"><svg class="size-3.5"><use href="#i-views"/></svg><svg class="h-[3px] w-[5px]"><use href="#i-caret"/></svg></button>
                            <button aria-label="Export" class="ml-2"><svg class="h-3.5 w-4"><use href="#i-export"/></svg></button>
                            <button aria-label="Audit log" class="ml-2.5"><svg class="size-3.5"><use href="#i-audit"/></svg></button>
                            <button aria-label="Form view" class="ml-2.5"><svg class="h-3 w-3.5"><use href="#i-form"/></svg></button>
                            <div class="ml-[7px] h-5 w-px bg-[#dcdcdc]"></div>
                            <button aria-label="Groups" class="ml-1.5"><svg class="h-3 w-4"><use href="#i-cubes"/></svg></button>
                            <div class="ml-1.5 h-5 w-px bg-[#dcdcdc]"></div>
                            <button aria-label="Move up" class="ml-[7px] text-[#a8a8a8]"><svg class="size-3.5"><use href="#i-up"/></svg></button>
                            <button aria-label="Move down" class="ml-2.5 text-[#30904a]"><svg class="size-3.5"><use href="#i-down"/></svg></button>
                            <div class="ml-[7px] h-5 w-px bg-[#dcdcdc]"></div>
                            <button aria-label="Filter" class="ml-2 flex items-center gap-1.5"><svg class="size-3"><use href="#i-funnel"/></svg><svg class="h-[3px] w-[5px]"><use href="#i-caret"/></svg></button>
                            <div class="ml-[7px] h-5 w-px bg-[#dcdcdc]"></div>
                            <button aria-label="Save layout" class="ml-2 flex items-center gap-2"><svg class="size-3.5"><use href="#i-savecopy"/></svg><svg class="h-[3px] w-[5px]"><use href="#i-caret"/></svg></button>
                            <div class="ml-[7px] h-5 w-px bg-[#dcdcdc]"></div>
                            <button aria-label="Preview" class="ml-2"><svg class="h-[15px] w-3.5"><use href="#i-preview"/></svg></button>
                        </div>
                        <table class="w-full table-fixed border-t border-[#dcdcdc]">
                            <thead>
                                <tr class="h-[15px] border-b border-[#ababab] text-left text-[#777]">
                                    <th class="w-[15px]"></th>
                                    <th class="w-[177px] border-l border-[#ababab] px-0.5 font-normal"><span class="flex items-center justify-between pr-3">Item Code<svg class="h-[5px] w-[9px]"><use href="#i-sort"/></svg></span></th>
                                    <th class="border-l border-[#ababab] px-0.5 font-normal">Description</th>
                                    <th class="w-[158px] border-l border-[#ababab] px-0.5 font-normal">Auto Lookup</th>
                                    <th class="w-[104px] border-l border-[#ababab] px-0.5 font-normal">Charge</th>
                                    <th class="w-[160px] border-l border-[#ababab] px-0.5 font-normal">Days Before</th>
                                </tr>
                            </thead>
                            <tbody id="rateRows"></tbody>
                        </table>
                        <div class="mt-auto flex h-[23px] items-center border-t border-[#dcdcdc]">
                            <div class="ml-[17px] h-[18px] w-[175px] bg-[#efefef] pr-0.5 pt-[3px] text-right">5</div>
                        </div>
                    </div>
                </div>
                <footer class="flex h-5 items-center justify-end bg-[#106ebe] pr-1.5"><svg class="size-2.5"><use href="#i-grip"/></svg></footer>
            </div>
        </section>
    </main>

    <script>
        const rates = [
            ['GV-EL', 'Government Early Rate', '$170.00', 60],
            ['GV-RG', 'Government Regular Rate', '$200.00', 0],
            ['M-NP-EL', 'Member Non-Profit Early Rate', '$175.00', 60],
            ['NP-EL', 'Non-Profit Early Rate', '$150.00', 60],
            ['NP-RG', 'Non-Profit Regular Rate', '$180.00', 0]
        ];

        document.getElementById('rateRows').innerHTML = rates.map(([code, desc, charge, days], i) => `
            <tr class="h-[18px] ${i === 0 ? 'bg-[#e5e5e5]' : 'bg-[#efefef]'}">
                <td class="bg-white">${i === 0 ? '<svg class="mx-auto h-[7px] w-1"><use href="#i-row"/></svg>' : ''}</td>
                <td class="border border-[#dcdcdc] pl-0.5 ${i === 0 ? 'bg-white' : ''}">${code}</td>
                <td class="border border-[#dcdcdc] pl-0.5">${desc}</td>
                <td class="border border-[#dcdcdc]">
                    <span class="grid place-items-center">
                        <input type="checkbox" checked aria-label="Auto lookup ${code}" class="peer col-start-1 row-start-1 size-3.5 appearance-none border border-[#ababab] bg-white">
                        <svg class="pointer-events-none invisible col-start-1 row-start-1 h-2 w-2.5 peer-checked:visible"><use href="#i-check"/></svg>
                    </span>
                </td>
                <td class="border border-[#dcdcdc] pr-px text-right">${charge}</td>
                <td class="border border-r-0 border-[#dcdcdc] pr-px text-right">${days}</td>
            </tr>`).join('');

        document.getElementById('listRows').innerHTML = Array.from({ length: 16 }, (_, i) => `
            <tr class="h-[18px] border-b border-[#dcdcdc] ${i === 1 ? 'bg-[#e5e5e5]' : 'bg-[#efefef]'}">
                <td></td>
                <td><input type="checkbox" aria-label="Inactive, row ${i + 1}" class="mx-auto block size-3.5 appearance-none border border-[#ababab] bg-white"></td>
            </tr>`).join('');
    </script>
</body>
</html>
